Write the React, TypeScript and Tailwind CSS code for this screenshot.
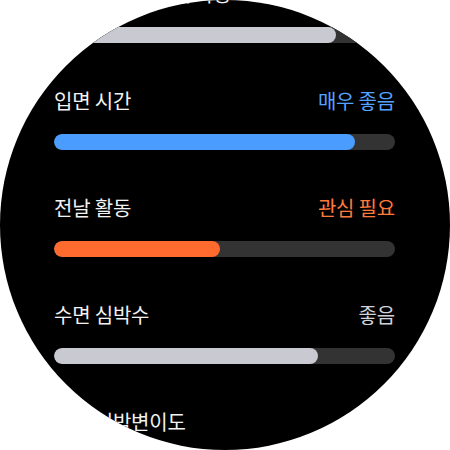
import React from "react";

type Factor = {
  label: string;
  value: string;
  valueClass: string;
  fillClass: string;
  pct: number;
};

const factors: Factor[] = [
  { label: "수면 시작 시간 규칙성", value: "좋음", valueClass: "text-[#d2d3da]", fillClass: "bg-[#c8c9d1]", pct: 82.7 },
  { label: "입면 시간", value: "매우 좋음", valueClass: "text-[#55a2ff]", fillClass: "bg-[#4a9dff]", pct: 88.3 },
  { label: "전날 활동", value: "관심 필요", valueClass: "text-[#ff7a3c]", fillClass: "bg-[#ff6a2f]", pct: 48.7 },
  { label: "수면 심박수", value: "좋음", valueClass: "text-[#d2d3da]", fillClass: "bg-[#c8c9d1]", pct: 77.4 },
  { label: "수면 심박변이도", value: "좋음", valueClass: "text-[#d2d3da]", fillClass: "bg-[#c8c9d1]", pct: 70 },
];

function FactorRow({ f }: { f: Factor }) {
  return (
    <div className="flex flex-col pb-[45px]">
      <div className="flex h-[26px] items-center justify-between text-[20px] leading-[26px] tracking-[-0.2px]">
        <span className="text-[#f2f2f2]">{f.label}</span>
        <span className={f.valueClass}>{f.value}</span>
      </div>
      <div className="mt-[20px] h-4 w-full overflow-hidden rounded-full bg-[#333333]">
        <div className={`h-full rounded-full ${f.fillClass}`} style={{ width: `${f.pct}%` }} />
      </div>
    </div>
  );
}

export default function App() {
  return (
    <div
      className="h-[450px] w-[450px] bg-white"
      style={{ fontFamily: '"Noto Sans CJK KR", "Noto Sans", sans-serif' }}
    >
      <div className="h-[450px] w-[450px] overflow-hidden rounded-full bg-black">
        <div className="-mt-[19px] flex flex-col pl-[54px] pr-[55px]">
          {factors.map((f) => (
            <FactorRow key={f.label} f={f} />
          ))}
        </div>
      </div>
    </div>
  );
}
